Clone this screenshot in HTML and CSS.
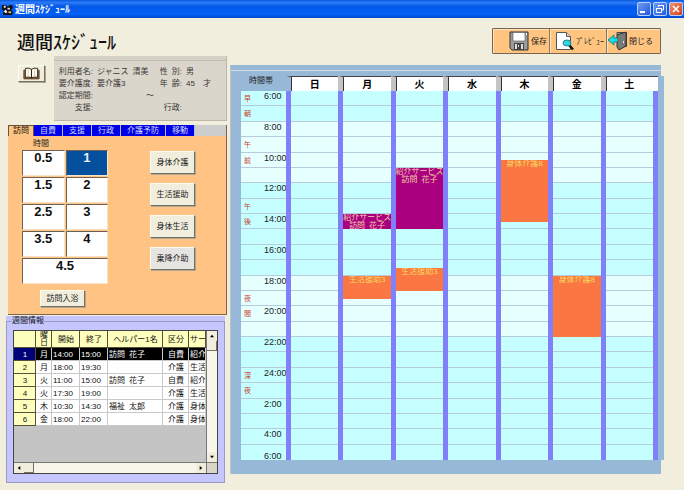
FILE: index.html
```html
<!DOCTYPE html>
<html lang="ja">
<head>
<meta charset="utf-8">
<title>週間ｽｹｼﾞｭｰﾙ</title>
<link rel="stylesheet" href="styles.css">
</head>
<body>
<header class="titlebar">
  <svg class="app-icon" viewBox="0 0 12 12" aria-hidden="true"><path fill="#111" d="M0 1h4l2 2 3-2h2l1 3-2 2 2 3-1 3H1l1-4-2-2z"/><path fill="#eee" d="M2 2h2v2H2zM6 4h2l1 2H6zM2 8l2-2 2 3-2 1z"/><path fill="#d8c890" d="M7 8h3v2H7z"/></svg>
  <span class="titlebar-text">週間ｽｹｼﾞｭｰﾙ</span>
  <button class="win" aria-label="最小化"><svg viewBox="0 0 12 12"><path d="M2 8h5v2H2z" fill="#fff"/></svg></button>
  <button class="win" aria-label="元に戻す"><svg viewBox="0 0 12 12"><path d="M4.500 4V2.500H9.500V7H8M2.500 5.500h5v4h-5zM4 2.500h6M2 5.500h6" fill="none" stroke="#fff"/></svg></button>
  <button class="win win-close" aria-label="閉じる"><svg viewBox="0 0 12 12"><path d="M3 3l6 6M9 3l-6 6" stroke="#fff" stroke-width="1.600"/></svg></button>
</header>

<div class="page-head">
  <h1>週間ｽｹｼﾞｭｰﾙ</h1>
  <div class="toolbar">
    <button>
      <svg class="tool-icon" viewBox="0 0 20 20"><path d="M1 1h18v18H3l-2-2z" fill="#9c9c9c" stroke="#333"/><path d="M4 1.500h12V10H4z" fill="#fff" stroke="#555" stroke-width=".6"/><path d="M5 12h10v7H5z" fill="#444"/><path d="M6 13h2v5H6zM9 14h1v2H9zM12 13h2v5h-2z" fill="#ddd"/><path d="M17 2h1v2h-1z" fill="#fff"/></svg>
      <span>保存</span>
    </button>
    <button>
      <svg class="tool-icon" viewBox="0 0 20 20"><path d="M2.500 1.500h10l4 4v13h-14z" fill="#fff" stroke="#555"/><path d="M12.500 1.500v4h4" fill="#ddd" stroke="#555"/><path d="M15 14l4 4.500" stroke="#111" stroke-width="2.500"/><ellipse cx="13" cy="12" rx="4" ry="3" fill="#34d4de" stroke="#168b98"/></svg>
      <span>ﾌﾟﾚﾋﾞｭｰ</span>
    </button>
    <button>
      <svg class="tool-icon" viewBox="0 0 20 20"><path d="M10 1.500h9.500v14H17V4h-7z" fill="#aaa" stroke="#444"/><path d="M19 1L10 4v12l2 3 7-4z" fill="#777b78" stroke="#333"/><path d="M16 10h1v2h-1z" fill="#eee"/><path d="M1 9l6-5v3h4v4H7v3z" fill="#20d8e0" stroke="#146b80" stroke-width=".8"/></svg>
      <span>閉じる</span>
    </button>
  </div>
</div>

<main class="main">
  <div class="side">
    <div class="client">
      <button class="book" aria-label="利用者台帳"><svg viewBox="0 0 18 14"><path d="M1 3v9.500h16V3" fill="#b98445" stroke="#3a2a18"/><path d="M2.500 1.500q4-1 6.500 1v9q-3-1.500-6.500-.5zM15.500 1.500q-4-1-6.500 1v9q3-1.500 6.500-.5z" fill="#fffdf0" stroke="#2b2118"/><path d="M12.500 2v8M5.500 2v8" stroke="#b9a98a" stroke-width=".6"/></svg></button>
      <dl class="info">
        <dt>利用者名:</dt><dd>ジャニス&ensp;清美</dd><dt>性&ensp;別:</dt><dd>男</dd>
        <dt>要介護度:</dt><dd>要介護3</dd><dt>年&ensp;齢:</dt><dd>45&emsp;才</dd>
        <dt>認定期間:</dt><dd class="range">～</dd>
        <dt>支援:</dt><dd></dd><dt>行政:</dt><dd></dd>
      </dl>
    </div>

    <section class="services">
      <nav class="tabs" role="tablist">
        <button class="tab is-active" role="tab" aria-selected="true">訪問</button>
        <button class="tab" role="tab">自費</button>
        <button class="tab" role="tab">支援</button>
        <button class="tab" role="tab">行政</button>
        <button class="tab" role="tab">介護予防</button>
        <button class="tab" role="tab">移動</button>
      </nav>
      <div class="service-body">
        <div class="hours">
          <h2>時間</h2>
          <div class="hour-grid">
            <button>0.5</button><button class="is-selected">1</button>
            <button>1.5</button><button>2</button>
            <button>2.5</button><button>3</button>
            <button>3.5</button><button>4</button>
            <button class="wide">4.5</button>
          </div>
          <button class="raised bath">訪問入浴</button>
        </div>
        <div class="kinds">
          <button class="raised">身体介護</button>
          <button class="raised">生活援助</button>
          <button class="raised">身体生活</button>
          <button class="raised is-gray">乗降介助</button>
        </div>
      </div>
    </section>

    <div class="weekly-panel">
    <fieldset class="weekly">
      <legend>週間情報</legend>
      <div class="list">
        <div class="list-view">
          <table>
            <colgroup><col class="c-no"><col class="c-day"><col class="c-time"><col class="c-time"><col class="c-name"><col class="c-kind"><col></colgroup>
            <thead><tr><th></th><th class="stack">曜<br>日</th><th>開始</th><th>終了</th><th>ヘルパー1名</th><th>区分</th><th>サー</th></tr></thead>
            <tbody>
              <tr class="is-current"><th>1</th><td>月</td><td>14:00</td><td>15:00</td><td>訪問&ensp;花子</td><td>自費</td><td>紹介</td></tr>
              <tr><th>2</th><td>月</td><td>18:00</td><td>19:30</td><td></td><td>介護</td><td>生活</td></tr>
              <tr><th>3</th><td>火</td><td>11:00</td><td>15:00</td><td>訪問&ensp;花子</td><td>自費</td><td>紹介</td></tr>
              <tr><th>4</th><td>火</td><td>17:30</td><td>19:00</td><td></td><td>介護</td><td>生活</td></tr>
              <tr><th>5</th><td>木</td><td>10:30</td><td>14:30</td><td>福祉&ensp;太郎</td><td>介護</td><td>身体</td></tr>
              <tr><th>6</th><td>金</td><td>18:00</td><td>22:00</td><td></td><td>介護</td><td>身体</td></tr>
            </tbody>
          </table>
        </div>
        <div class="vbar">
          <button aria-label="上へ"><svg viewBox="0 0 6 6"><path d="M0 5l3-4 3 4z"/></svg></button>
          <span class="thumb"></span>
          <button class="end" aria-label="下へ"><svg viewBox="0 0 6 6"><path d="M0 1l3 4 3-4z"/></svg></button>
        </div>
        <div class="hbar">
          <button aria-label="左へ"><svg viewBox="0 0 6 6"><path d="M5 0L1 3l4 3z"/></svg></button>
          <span class="thumb"></span>
          <button class="end" aria-label="右へ"><svg viewBox="0 0 6 6"><path d="M1 0l4 3-4 3z"/></svg></button>
        </div>
        <div class="corner"></div>
      </div>
    </fieldset>
    </div>
  </div>

  <section class="schedule">
    <div class="days">
      <span class="zone">時間帯</span>
      <span class="day">日</span><span class="day">月</span><span class="day">火</span><span class="day">水</span><span class="day">木</span><span class="day">金</span><span class="day">土</span>
    </div>
    <div class="board" id="board"></div>
  </section>
</main>
<script src="script.js"></script>
</body>
</html>
```
FILE: styles.css
```css
* { box-sizing: border-box; }

body {
  margin: 0;
  min-height: 100vh;
  display: flex;
  flex-direction: column;
  background: #f1eedd;
  color: #222;
  font: 8px/10px "Liberation Sans", "Noto Sans CJK JP", sans-serif;
}

button {
  margin: 0;
  padding: 0;
  border: 0;
  border-radius: 0;
  font: inherit;
  color: inherit;
  white-space: nowrap;
}

svg { display: block; }
h1, h2, dl, dd { margin: 0; }

/* Window title */
.titlebar {
  display: flex;
  align-items: center;
  gap: 2px;
  height: 18px;
  padding: 0 1px 0 2px;
  background: linear-gradient(#0a5be0, #2a7cf8 15%, #0558e8 35%, #0360f8 80%, #0148c8);
  color: #fff;
}
.app-icon { width: 11px; height: 11px; }
.titlebar-text { flex: 1; font: bold 10px/16px "Noto Sans CJK JP", sans-serif; }
.win {
  width: 14px;
  height: 14px;
  border: 1px solid #b9cdf6;
  border-radius: 2px;
  background: linear-gradient(135deg, #6f9df5, #2457d8);
}
.win-close { background: linear-gradient(135deg, #f0916f, #d4401c); }

/* Heading and toolbar */
.page-head {
  display: flex;
  justify-content: space-between;
  height: 38px;
  padding: 10px 23px 0 17px;
}
h1 { font: 500 18px/26px "Noto Sans CJK JP", sans-serif; color: #111; }
.toolbar {
  display: flex;
  height: 26px;
  border: 1px solid #756553;
  border-radius: 1px;
  background: #ffc580;
}
.toolbar button {
  display: flex;
  align-items: center;
  justify-content: flex-end;
  gap: 2px;
  width: 57px;
  padding-right: 2px;
  background: #ffc580;
  border-right: 1px solid #8a7763;
  box-shadow: inset 1px 1px #ffe3bd;
  font: 8px/12px "Noto Sans CJK JP", sans-serif;
}
.toolbar button:last-child { width: 53px; padding-right: 7px; border-right: 0; }
.tool-icon { width: 20px; height: 20px; }

.main {
  flex: 1;
  display: flex;
  gap: 3px;
  padding: 0 23px 7px 6px;
}
.side {
  display: flex;
  flex-direction: column;
  flex: 0 0 221px;
}

/* Client details */
.client { display: flex; align-items: flex-start; gap: 9px; padding-left: 12px; }
.book, .raised {
  background: #f1eedd;
  border: 1px solid;
  border-color: #fffdf2 #77705f #77705f #fffdf2;
  box-shadow: 1px 1px #b0a68f;
}
.book { width: 27px; height: 17px; margin-top: 9px; padding: 1px 4px; }
.info {
  flex: 1;
  display: grid;
  grid-template-columns: 38px 57px 24px 1fr;
  grid-auto-rows: 12px;
  column-gap: 4px;
  align-items: center;
  height: 65px;
  padding: 10px 0 0 1px;
  background: linear-gradient(#d6d1c7 4px, #c3bdb2 4px, #c3bdb2 5px, #dad6cc 5px);
  border-right: 1px solid #bdb7aa;
  border-bottom: 1px solid #bdb7aa;
  white-space: nowrap;
  color: #3a3836;
}
.info dt { text-align: right; }
.info .range { grid-column: 2 / 5; padding-left: 49px; }

/* Service picker */
.services {
  margin: 4px 0 0 2px;
  height: 190px;
  background: #ffc484;
  border-right: 1px solid #7c6548;
  border-bottom: 1px solid #7c6548;
}
.tabs { display: flex; height: 11px; background: #cdcdcd; }
.tab {
  padding: 0 6px;
  background: #0000e8;
  border-right: 1px solid #b9b9d8;
  color: #d4d8ff;
  line-height: 10px;
}
.tab.is-active {
  padding: 0 4px;
  background: #ffc484;
  border: 1px solid #6b5337;
  border-bottom: 0;
  color: #111;
}
.service-body { display: flex; gap: 42px; padding: 1px 0 0 14px; }
.hours { width: 86px; }
.hours h2 { padding-left: 11px; font: 8px/12px "Noto Sans CJK JP", sans-serif; }
.hour-grid {
  display: grid;
  grid-template-columns: 1fr 1fr;
  grid-auto-rows: 26px;
  gap: 1px;
  margin-top: 1px;
}
.hour-grid button {
  display: flex;
  justify-content: center;
  background: #fff;
  border: 1px solid;
  border-color: #6e6257 #f6e3ca #f6e3ca #6e6257;
  color: #111;
  font: bold 13px/13px "Liberation Sans", sans-serif;
}
.hour-grid .is-selected { background: #04509f; color: #e8f2ff; }
.hour-grid .wide { grid-column: span 2; }
.bath { width: 45px; height: 17px; margin: 6px 0 0 18px; }
.kinds { display: flex; flex-direction: column; gap: 9px; padding-top: 14px; }
.kinds .raised { width: 45px; height: 23px; }
.raised.is-gray { background: #e6e4e0; }

/* Weekly list */
.weekly-panel {
  flex: 1;
  display: flex;
  margin: 1px 2px 0 0;
  background: #c6c6ff;
}
.weekly {
  flex: 1;
  display: flex;
  flex-direction: column;
  min-width: 0;
  margin: 0;
  padding: 4px 6px 8px;
  border: 1px solid #9a9ac4;
}
.weekly legend { margin-left: -1px; padding: 0; color: #111; }
.list {
  flex: 1;
  display: grid;
  grid-template-columns: minmax(0, 1fr) 11px;
  grid-template-rows: minmax(0, 1fr) 11px;
  border: 1px solid #444;
  background: #c4c4c4;
}
.list-view { overflow: hidden; }
table { width: 100%; table-layout: fixed; border-collapse: separate; border-spacing: 0; }
.c-no { width: 22px; }
.c-day { width: 16px; }
.c-time { width: 28px; }
.c-name { width: 55px; }
.c-kind { width: 26px; }
tr { height: 13px; }
thead tr { height: 17px; }
th, td {
  padding: 0 0 0 1px;
  border-right: 1px solid #c9c9c9;
  border-bottom: 1px solid #c9c9c9;
  white-space: nowrap;
  overflow: hidden;
  line-height: 11px;
  text-align: left;
  color: #111;
}
td { background: #fff; }
td:nth-child(2), td:nth-child(6) { text-align: center; }
th {
  background: #ffffbd;
  border-color: #55513a;
  font-weight: normal;
  text-align: center;
}
th.stack { line-height: 8px; }
.is-current td { background: #000; color: #fff; }
.is-current th { background: #000078; color: #fff; }
.vbar, .hbar { display: flex; background: #f8f6ea; }
.vbar { flex-direction: column; border-left: 1px solid #777; }
.hbar { border-top: 1px solid #777; }
.vbar button, .hbar button {
  display: grid;
  place-items: center;
  width: 10px;
  height: 10px;
  background: #f1eedd;
}
.vbar svg, .hbar svg { width: 4px; height: 4px; }
.thumb {
  width: 10px;
  height: 10px;
  background: #f1eedd;
  border-right: 1px solid #77705f;
  border-bottom: 1px solid #77705f;
}
.vbar .end { margin-top: auto; }
.hbar .end { margin-left: auto; }
.corner { background: #d9d6c8; border: 1px solid #777; border-width: 1px 0 0 1px; }

/* Week schedule */
.schedule {
  position: relative;
  flex: 1;
  display: flex;
  flex-direction: column;
  min-width: 0;
  margin: 9px 0;
  padding: 11px 3px 14px 11px;
  background: linear-gradient(#98b8d8 5px, #d5dbe0 5px, #d5dbe0 6px, #98b8d8 6px);
  border-left: 1px solid #bcc4c4;
}
.schedule::after {
  content: "";
  position: absolute;
  top: 11px;
  right: -3px;
  bottom: 14px;
  width: 6px;
  background: #98b8d8;
}
.days, .board {
  display: grid;
  grid-template-columns: 45px repeat(7, 5px minmax(0, 1fr)) 5px;
}
.days { height: 15px; margin-left: -1px; }
.zone { padding-left: 8px; }
.day {
  grid-column: span 2;
  border-left: 5px solid #c4c4c4;
  border-top: 1px solid #444;
  background: #fff;
  box-shadow: inset 1px 0 #333;
  text-align: center;
  color: #000;
  font: bold 10px/14px "Noto Sans CJK JP", sans-serif;
}
.zone + .day { border-left-color: #98b8d8; }
.day:last-child { grid-column: span 3; padding-right: 5px; }
.board {
  flex: 1;
  grid-template-rows: repeat(48, minmax(0, 1fr));
  margin-left: -1px;
}
.slot {
  grid-column: 1 / -1;
  display: flex;
  min-height: 0;
  background: #c6ffff;
  border-bottom: 1px solid #b7cbdc;
}
.slot.is-light { background: #e6ffff; }
.slot b {
  width: 23px;
  padding-left: 3px;
  color: #c83a2c;
  font: 7px/14px "Noto Sans CJK JP", sans-serif;
}
.slot time { font-size: 9px; line-height: 10px; }
.slot.is-last { border-bottom: 0; }
.slot.is-last time { align-self: flex-end; line-height: 8px; }
.bar { grid-row: 1 / -1; background: #8080fa; }
.event {
  contain: size;
  display: flex;
  flex-direction: column;
  align-items: center;
  overflow: hidden;
  background: #fa7642;
  color: #f8d860;
  line-height: 8px;
  white-space: nowrap;
}
.event.is-private { background: #aa0080; color: #f2cfa0; }
```
FILE: script.js
```js
const board = document.getElementById("board");
const START = 6;
const zones = { 6: "早", 7: "朝", 9: "午", 10: "前", 13: "午", 14: "後", 19: "夜", 20: "間", 24: "深", 25: "夜" };
const events = [
  { day: 1, from: 14, to: 15, lines: ["紹介サービス", "訪問\u2002花子"], own: true },
  { day: 1, from: 18, to: 19.5, lines: ["生活援助3"] },
  { day: 2, from: 11, to: 15, lines: ["紹介サービス", "訪問\u2002花子"], own: true },
  { day: 2, from: 17.5, to: 19, lines: ["生活援助3"] },
  { day: 4, from: 10.5, to: 14.5, lines: ["身体介護8"] },
  { day: 5, from: 18, to: 22, lines: ["身体介護8"] }
];

function add(tag, className, parent, text) {
  const el = document.createElement(tag);
  if (className) el.className = className;
  if (text) el.textContent = text;
  parent.append(el);
  return el;
}

const line = hour => (hour - START) * 2 + 1;

for (let hour = START; hour < START + 24; hour++) {
  const light = (hour >= 8 && hour < 12) || (hour >= 18 && hour < 22);
  const slot = add("div", "slot" + (light ? " is-light" : ""), board);
  slot.style.gridRow = line(hour) + " / span 2";
  add("b", "", slot, zones[hour]);
  if (hour % 2 === 0) add("time", "", slot, (hour > 24 ? hour - 24 : hour) + ":00");
  if (hour === START + 23) {
    slot.classList.add("is-last");
    add("time", "", slot, "6:00");
  }
}

for (let i = 0; i < 8; i++) {
  add("div", "bar", board).style.gridColumn = i * 2 + 2;
}

for (const e of events) {
  const box = add("div", "event" + (e.own ? " is-private" : ""), board);
  box.style.gridColumn = e.day * 2 + 3;
  box.style.gridRow = line(e.from) + " / " + line(e.to);
  e.lines.forEach(text => add("span", "", box, text));
}
```
